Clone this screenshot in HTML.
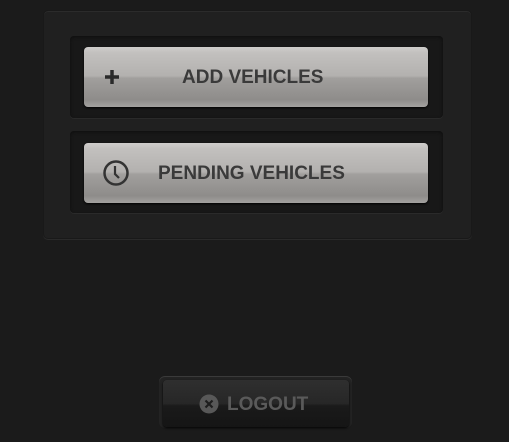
<!DOCTYPE html>
<html><head><style>
html,body{margin:0;padding:0;width:509px;height:442px;overflow:hidden;background:#1b1b1b;font-family:"Liberation Sans",sans-serif;}
.panel{position:absolute;left:43px;top:10px;width:427px;height:227px;background:#202020;border-radius:5px;box-shadow:0 1px 0 #2a2a2a, inset 0 1px 0 #2b2b2b;border:1px solid #191919;}
.well{position:absolute;left:70px;width:373px;height:82px;background:#181818;border-radius:4px;box-shadow:inset 0 1px 3px #0e0e0e,0 1px 0 #2a2a2a;}
.btn{position:absolute;left:84px;width:344px;height:60px;border-radius:4px;background:linear-gradient(#cfcdcb 0%,#c2c0be 10%,#b3b1af 48%,#a19f9d 52%,#8e8c8a 88%,#a4a2a0 100%);box-shadow:0 1px 2px #000;color:#3a3a3a;font-weight:bold;font-size:19px;}
.btn span{position:absolute;top:20px;}
.logo{position:absolute;left:159px;top:376px;width:193px;height:52px;border-radius:6px;background:#232323;box-shadow:inset 0 1px 0 #3a3a3a;}
.lb{position:absolute;left:163px;top:380px;width:186px;height:47px;border-radius:4px;background:linear-gradient(#2f2f2f,#272727 50%,#1a1a1a 55%,#151515);box-shadow:0 1px 2px #000;color:#5a5a5a;font-weight:bold;font-size:19px;}
</style></head><body>
<div class="panel"></div>
<div class="well" style="top:36px"></div>
<div class="well" style="top:131px"></div>
<div class="btn" style="top:47px">
<svg style="position:absolute;left:20px;top:22px" width="16" height="16"><path d="M8 1v14M1 8h14" stroke="#2a2a2a" stroke-width="3.5"/></svg>
<span style="left:98px">ADD VEHICLES</span></div>
<div class="btn" style="top:143px">
<svg style="position:absolute;left:17px;top:15px" width="30" height="30"><circle cx="15" cy="15" r="11.5" fill="none" stroke="#333" stroke-width="2.5"/><path d="M14 8v8l4 4" fill="none" stroke="#333" stroke-width="2.2"/></svg>
<span style="left:74px">PENDING VEHICLES</span></div>
<div class="logo"></div>
<div class="lb">
<svg style="position:absolute;left:36px;top:14px" width="20" height="20"><circle cx="10" cy="10" r="9.5" fill="#585858"/><path d="M6.5 6.5l7 7M13.5 6.5l-7 7" stroke="#1e1e1e" stroke-width="2.2"/></svg>
<span style="position:absolute;left:64px;top:14px">LOGOUT</span></div>
</body></html>
